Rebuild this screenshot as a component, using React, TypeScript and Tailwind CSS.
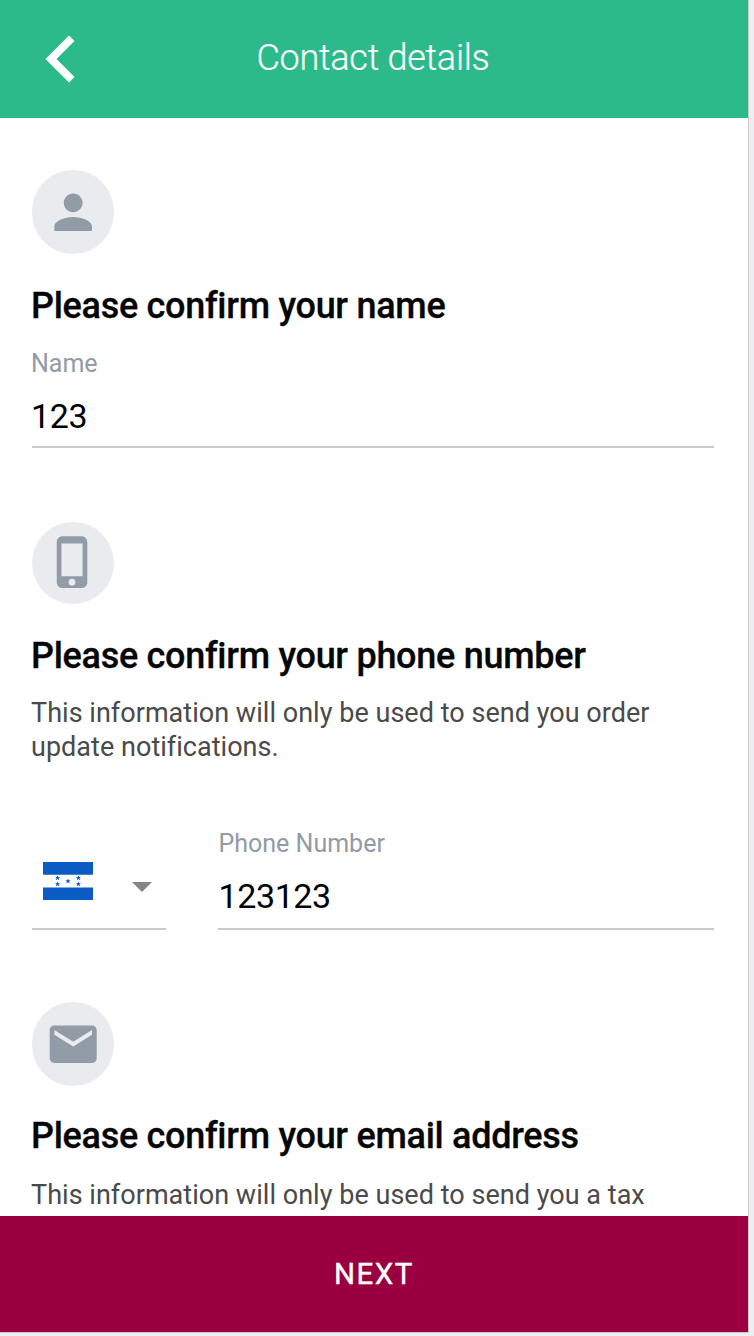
import type { ReactNode } from 'react';

const PERSON = 'M12 12c2.21 0 4-1.79 4-4s-1.79-4-4-4-4 1.79-4 4 1.79 4 4 4zm0 2c-2.67 0-8 1.34-8 4v2h16v-2c0-2.66-5.33-4-8-4z';
const PHONE = 'M15.5 1h-8C6.12 1 5 2.12 5 3.5v17C5 21.88 6.12 23 7.5 23h8c1.38 0 2.5-1.12 2.5-2.5v-17C18 2.12 16.88 1 15.5 1zm-4 21c-.83 0-1.5-.67-1.5-1.5s.67-1.5 1.5-1.5 1.5.67 1.5 1.5-.67 1.5-1.5 1.5zm4.5-4H7V4h9v14z';
const MAIL = 'M20 4H4c-1.1 0-1.99.9-1.99 2L2 18c0 1.1.9 2 2 2h16c1.1 0 2-.9 2-2V6c0-1.1-.9-2-2-2zm0 4l-8 5-8-5V6l8 5 8-5v2z';
const STAR = 'M0-2.6.7-.8 2.6-.7 1.1.45 1.7 2.3 0 1.2-1.7 2.3-1.1.45-2.6-.7-.7-.8z';

function Badge({ path, className }: { path: string; className: string }) {
  return (
    <div className={`flex w-[82px] items-center justify-center rounded-full bg-[#e9ebef] text-[#929ca6] ${className}`}>
      <svg viewBox="0 0 24 24" className="size-[56.4px] shrink-0" fill="currentColor">
        <path d={path} />
      </svg>
    </div>
  );
}

function Heading({ children }: { children: ReactNode }) {
  return (
    <h2 className="-ml-px h-10 text-[36px] leading-10 font-medium tracking-[-0.29px] whitespace-nowrap text-[#060606] [-webkit-text-stroke:0.3px_#060606]">
      {children}
    </h2>
  );
}

function Field({ label, value, className, textClass }: { label: string; value: string; className: string; textClass: string }) {
  return (
    <div className={`flex flex-col border-b-2 border-[#c9c9c9] ${className}`}>
      <span className={`h-8 text-[25px] leading-8 text-[#929ba5] ${textClass}`}>{label}</span>
      <span className={`mt-4 h-10 text-[34px] leading-10 tracking-[-0.4px] text-black ${textClass}`}>{value}</span>
    </div>
  );
}

function Flag() {
  return (
    <svg viewBox="0 0 50 38" className="h-[38px] w-[50px]">
      <rect width="50" height="38" fill="#fff" />
      <path d="M0 0h50v12.7H0zM0 25.6h50V38H0z" fill="#0a5bc4" />
      <g fill="#0a5bc4">
        <path d={STAR} transform="translate(14.6 15.9)" />
        <path d={STAR} transform="translate(14.6 22)" />
        <path d={STAR} transform="translate(25 19.1)" />
        <path d={STAR} transform="translate(35.4 15.9)" />
        <path d={STAR} transform="translate(35.4 22)" />
      </g>
    </svg>
  );
}

export default function App() {
  return (
    <div className="h-[1336px] w-[754px] overflow-hidden bg-[#eeeef0] font-['Roboto',sans-serif]">
      <div className="flex h-[1333px] w-[749px] flex-col border-r border-b border-[#c8c8cc] bg-white">
        <header className="grid h-[118px] shrink-0 grid-cols-[120px_1fr_122px] items-center bg-[#2dba8b]">
          <button aria-label="Back" className="flex pl-[45px]">
            <svg viewBox="0 0 30 48" className="h-12 w-[30px]" fill="#fff">
              <path d="M24 .4 29.5 5.9 11.5 24 29.5 42.1 24 47.6.4 24z" />
            </svg>
          </button>
          <h1 className="pb-[2px] text-center text-[36px] leading-10 font-light tracking-[-0.27px] text-white [-webkit-text-stroke:0.2px_white]">
            Contact details
          </h1>
        </header>

        <main className="flex min-h-0 flex-1 flex-col overflow-hidden pt-[52px] pr-[34px] pl-8">
          <section className="h-[352px] shrink-0">
            <Badge path={PERSON} className="h-[84px]" />
            <div className="mt-8">
              <Heading>Please confirm your name</Heading>
            </div>
            <Field label="Name" value="123" className="mt-[22px] h-[100px]" textClass="-ml-px" />
          </section>

          <section className="h-[480px] shrink-0">
            <Badge path={PHONE} className="h-[82px] pb-[2px]" />
            <div className="mt-8">
              <Heading>Please confirm your phone number</Heading>
            </div>
            <p className="mt-5 -ml-px text-[27px] leading-[34px] tracking-[0.03px] text-[#4a4a4a]">
              This information will only be used to send you order
              <br />
              update notifications.
            </p>
            <div className="mt-[64px] flex items-end justify-between">
              <div className="flex h-[70px] w-[134px] items-start justify-between border-b-2 border-[#c9c9c9] pt-[2px] pr-[14px] pl-[11px]">
                <Flag />
                <svg viewBox="0 0 20 10" className="mt-5 h-[10px] w-5" fill="#858585">
                  <path d="M0 0h20L10 10z" />
                </svg>
              </div>
              <Field label="Phone Number" value="123123" className="h-[102px] w-[496px]" textClass="pl-[0.5px]" />
            </div>
          </section>

          <section className="shrink-0">
            <Badge path={MAIL} className="h-[84px]" />
            <div className="mt-[30px]">
              <Heading>Please confirm your email address</Heading>
            </div>
            <p className="mt-[22px] -ml-px text-[27px] leading-[34px] tracking-[0.03px] text-[#4a4a4a]">
              This information will only be used to send you a tax
            </p>
          </section>
        </main>

        <button className="h-[116px] shrink-0 bg-[#9a003f] text-[29.5px] leading-[116px] font-normal tracking-[1.5px] text-white [-webkit-text-stroke:0.4px_white]">
          NEXT
        </button>
      </div>
    </div>
  );
}
